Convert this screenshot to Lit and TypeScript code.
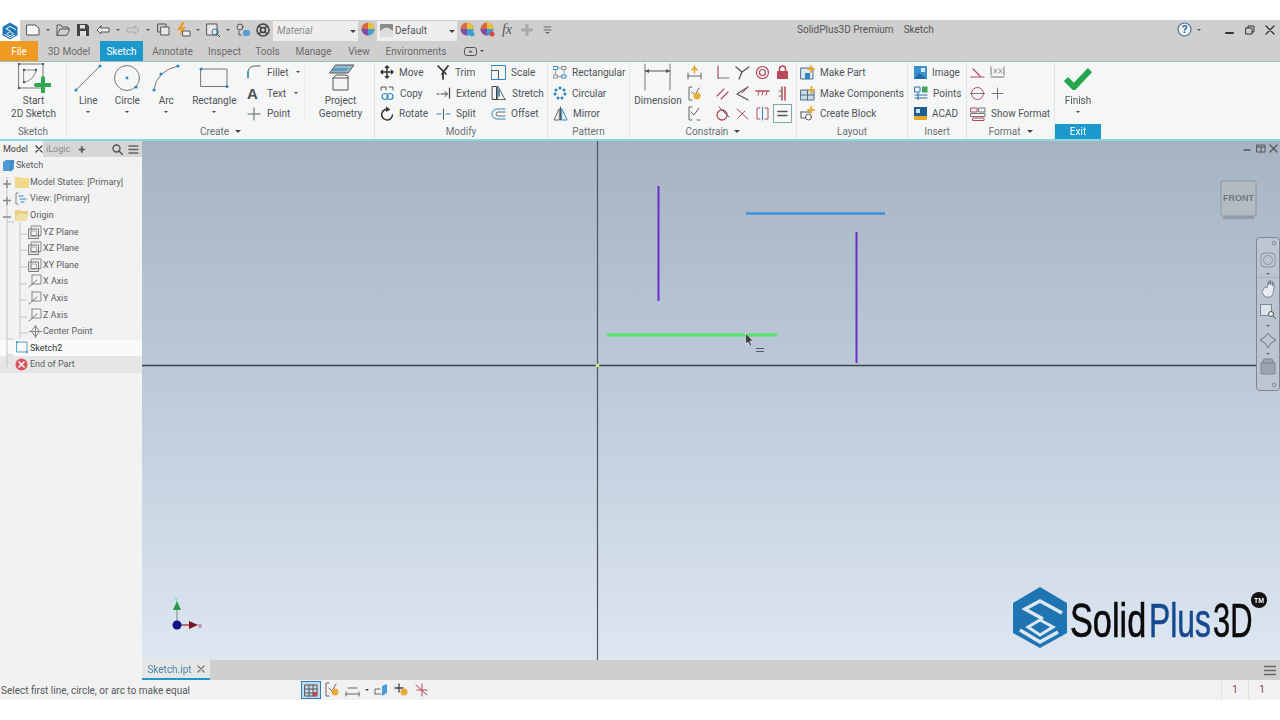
import { LitElement, html, css, svg, nothing } from 'lit';
import { customElement } from 'lit/decorators.js';

// small helper: every ribbon icon is an inline svg drawn on a w x h box
const ic = (w: number, h: number, body: unknown) =>
  html`<svg class="ic" width=${w} height=${h} viewBox="0 0 ${w} ${h}" fill="none" stroke-linecap="round" stroke-linejoin="round">${body}</svg>`;

const BLUE = '#2c86c4';
const GREY = '#5f6468';
const RED = '#b8485a';

const dot = (x: number, y: number, c = BLUE, r = 1.3) => svg`<circle cx=${x} cy=${y} r=${r} fill=${c}/>`;

const icons: Record<string, unknown> = {
  fillet: ic(16, 16, svg`<path d="M2 14V8q0-5 6-6h6" stroke=${GREY} stroke-width="1"/><path d="M2 13V8" stroke=${BLUE} stroke-width="1.4"/>`),
  text: ic(16, 16, svg`<text x="1" y="14" font-family="Liberation Sans" font-weight="700" font-size="15" fill="#4a4f53">A</text>`),
  point: ic(16, 16, svg`<path d="M8 2v12M2 8h12" stroke=${GREY}/>`),
  move: ic(14, 14, svg`<path d="M7 1v12M1 7h12M5.500 2.500 7 1l1.500 1.500M5.500 11.500 7 13l1.500-1.500M2.500 5.500 1 7l1.500 1.500M11.500 5.500 13 7l-1.500 1.500" stroke="#333" stroke-width="1.500"/>`),
  copy: ic(15, 15, svg`<path d="M1 4V1h5v3M9 1h4v3" stroke="#555"/><circle cx="5" cy="10.500" r="3" stroke=${BLUE} stroke-width="1.200"/><circle cx="10" cy="10.500" r="3" stroke=${BLUE} stroke-width="1.200"/>`),
  rotate: ic(14, 15, svg`<path d="M9 3.500A5.400 5.400 0 1 0 12.500 9" stroke="#333" stroke-width="1.500"/><path d="M6 .5 10 3.500 6 6Z" fill="#333"/>`),
  trim: ic(14, 15, svg`<path d="M2 1l8 8M12 1 6 9M7 6v8" stroke="#333" stroke-width="1.700"/>`),
  extend: ic(15, 12, svg`<path d="M1 7h2M5 7h6M9 4.500 11.500 7 9 9.500" stroke="#444"/><path d="M13.500 1v10" stroke="#444" stroke-width="1.200"/>`),
  split: ic(15, 12, svg`<path d="M1 6h4M10 6h4" stroke=${BLUE}/><path d="M7.500 1v10" stroke="#555"/>`),
  scale: ic(15, 15, svg`<rect x=".5" y="5.500" width="7" height="9" stroke="#555"/><rect x=".5" y=".5" width="14" height="14" stroke=${BLUE} fill="none"/>`),
  stretch: ic(16, 16, svg`<path d="M1.500 1.500h4v13h-4zM1.500 14.500h13" stroke="#444"/><path d="M7 1.500 14 14.500H7z" stroke=${GREY}/><path d="M8 5v6" stroke=${BLUE} stroke-width="1.600"/>`),
  offset: ic(15, 12, svg`<path d="M14 1H6a5 5 0 0 0 0 10h8" stroke=${BLUE}/><path d="M14 4H7a2 2 0 0 0 0 4h7" stroke="#666"/>`),
  rect: ic(14, 13, svg`<rect x=".5" y=".5" width="4" height="3" stroke=${BLUE}/><rect x="9" y=".5" width="4" height="3" stroke="#888"/><rect x=".5" y="9" width="4" height="3" stroke="#888"/><rect x="9" y="9" width="4" height="3" stroke=${BLUE}/><path d="M5 2h3M2.500 4v4M11 4v4M5 10.500h3" stroke="#999"/>`),
  circ: ic(14, 14, svg`${[[7, 2], [11, 4], [12, 8], [9, 12], [5, 12], [2, 8], [3, 4]].map(([x, y]) => dot(x, y, '#2c7fc0', 1.5))}`),
  mirror: ic(15, 15, svg`<path d="M7.500 1v13" stroke="#555"/><path d="M6 3 1 14h5z" stroke="#666"/><path d="M9 3l5 11H9z" stroke=${BLUE}/>`),
  part: ic(15, 15, svg`<rect x="1" y="3" width="12" height="11" fill="#dfe8ef" stroke="#4a6d8c"/><rect x="5" y="8" width="5" height="6" fill=${BLUE}/><path d="M11 1v6M8 4h6" stroke="#e9a92c" stroke-width="1.800"/>`),
  comps: ic(15, 15, svg`<rect x="1" y="4" width="13" height="10" fill="#cfdce6" stroke="#4a6d8c"/><path d="M7.500 4v10M1 9h13" stroke="#4a6d8c"/><path d="M11.500 1v6M8.500 4h6" stroke="#e9a92c" stroke-width="1.800"/>`),
  block: ic(15, 15, svg`<path d="M1 6h9M1 6v6h4" stroke="#555"/><circle cx="8.500" cy="11" r="3" stroke="#555"/><path d="M11 1v6M8 4h6" stroke="#e9a92c" stroke-width="1.800"/>`),
  image: ic(13, 13, svg`<rect width="13" height="13" fill="#3d8fd0"/><rect x="7" y="2" width="4" height="4" fill="#d5ecfa"/><path d="M0 13 5 7l8 6Z" fill="#1f6aa8"/>`),
  points: ic(14, 14, svg`<rect x="1" y="1" width="5" height="5" stroke="#2c6ea8"/><rect x="8" y=".5" width="5.500" height="6" fill="#3da35d"/><path d="M1 9h12M1 12h12M4 7v7" stroke="#2c6ea8"/>`),
  acad: ic(13, 13, svg`<rect width="13" height="13" fill="#1f5f8f"/><path d="M0 9h13v4H0z" fill="#e8a92a"/><rect x="2" y="2" width="4" height="4" fill="#cfe3f2"/>`),
  format: ic(16, 14, svg`<rect x="1" y="1" width="6" height="4" stroke=${RED}/><rect x="9" y="1" width="6" height="4" stroke="#777"/><rect x="1" y="6.500" width="14" height="3" stroke="#777"/><rect x="3" y="11" width="11" height="2.500" stroke=${RED}/>`),
};

type Item = { icon: string; label: string; caret?: boolean };

const col = (items: Item[], width: number) => html`<div class="stack" style="width:${width}px">
  ${items.map(i => html`<div class="row">${icons[i.icon]}<span>${i.label}</span>${i.caret ? html`<i class="caret"></i>` : nothing}</div>`)}
</div>`;

const big = (icon: unknown, label: string, width: number, caret = true) => html`<div class="big" style="width:${width}px">
  <div class="big-ic">${icon}</div>
  <span>${label}</span>
  ${caret ? html`<i class="caret"></i>` : nothing}
</div>`;

const line = ic(30, 30, svg`<path d="M3 27 27 3" stroke="#777" stroke-width="1"/>${dot(3, 27, BLUE, 1.6)}${dot(27, 3, BLUE, 1.6)}`);
const circle = ic(30, 30, svg`<circle cx="15" cy="15" r="12.500" stroke="#777"/>${dot(15, 15, BLUE, 1.4)}${dot(24, 24, BLUE, 1.6)}`);
const arc = ic(30, 30, svg`<path d="M3 27Q5 8 27 3" stroke="#777"/>${dot(3, 27, BLUE, 1.6)}${dot(27, 3, BLUE, 1.6)}${dot(10, 11, BLUE, 1.5)}`);
const rectangle = ic(30, 24, svg`<rect x="2" y="3" width="26" height="17.500" stroke="#777"/>${dot(2, 3, BLUE, 1.5)}${dot(28, 20.5, BLUE, 1.5)}`);
const project = ic(28, 28, svg`<path d="M9 1h18l-6 8H3z" fill="#9bb9cc" stroke="#555"/><path d="M7 4h15l-3 3H5z" fill="#5f9bc4"/><path d="M6 14h15v-2l-3-1H9l-3 3v12h15V14" stroke="#555" fill="#f4f4f4"/>`);
const start = ic(34, 30, svg`<rect x="2" y="1" width="24" height="24" stroke="#777"/><path d="M7 7h12q-1 8-10 12H7z" stroke="#888"/>${[[2, 1], [26, 1], [2, 25], [7, 7], [19, 7], [7, 19]].map(([x, y]) => dot(x, y, '#555', 1.2))}<path d="M26 15v14M19 22h14" stroke="#2fa84f" stroke-width="4"/>`);
const dim = ic(30, 30, svg`<path d="M2 1v26M27 1v26" stroke="#777"/><path d="M2 8h25" stroke="#555"/><path d="M2 8l4-2v4zM27 8l-4-2v4z" fill="#555"/>`);
const check = ic(28, 24, svg`<path d="M2 13 10 21 26 4" stroke="#24a64a" stroke-width="6" stroke-linejoin="miter" stroke-linecap="butt"/>`);

// constrain grid, laid out on 3 rows of 20px columns
const c = (body: unknown) => ic(15, 15, body);
const constrainRows = [
  [c(svg`<path d="M1 11h13M1 8v6M14 8v6" stroke="#666"/><path d="M7.500 1v7M5 5l2.500-3L10 5" stroke="#e2a62b" stroke-width="1.500"/>`),
    c(svg`<path d="M3 1v12" stroke=${RED} stroke-width="1.200"/><path d="M3 13h11" stroke="#777"/>`),
    c(svg`<path d="M1 2l6 5 7-5M7 7l-3 7" stroke="#555" stroke-width="1.300"/>`),
    c(svg`<circle cx="7.500" cy="7.500" r="6" stroke=${RED} stroke-width="1.200"/><circle cx="7.500" cy="7.500" r="3" stroke=${RED} stroke-width="1.200"/>`),
    c(svg`<rect x="2" y="6" width="11" height="8" rx="1" fill=${RED}/><path d="M4.500 6V4a3 3 0 0 1 6 0v2" stroke=${RED} stroke-width="1.500"/>`)],
  [c(svg`<path d="M5 1H2v13h3" stroke="#666"/><path d="M5 6l3 3 4-7" stroke="#666"/><circle cx="10" cy="10" r="3.500" fill="#e8ac3a"/>`),
    c(svg`<path d="M2 10 9 3M6 13 13 6" stroke=${RED} stroke-width="1.100"/>`),
    c(svg`<path d="M13 1 2 8l11 6" stroke="#555" stroke-width="1.200"/><path d="M7 7 13 1" stroke=${RED}/>`),
    c(svg`<path d="M1 5h13" stroke=${RED} stroke-width="1.500"/><path d="M3 9l1-3M7 9l1-3M11 9l1-3" stroke=${RED}/>`),
    c(svg`<path d="M7 1v13M10 1v13" stroke=${RED} stroke-width="1.500"/><path d="M4 5h3M4 10h3" stroke="#777"/>`)],
  [c(svg`<path d="M5 1H2v13h3" stroke="#666"/><path d="M4 6l3 3 5-7" stroke="#666"/><path d="M10 14h3" stroke="#666"/>`),
    c(svg`<circle cx="7" cy="9" r="5" stroke=${RED} stroke-width="1.300"/><path d="M4 1l10 10" stroke="#555"/>`),
    c(svg`<path d="M2 3l11 10M3 12l7-7" stroke=${RED}/>`),
    c(svg`<path d="M5 2H2v11h3M10 2h3v11h-3" stroke=${RED}/><path d="M7.500 1v13" stroke=${BLUE}/>`),
    c(svg`<path d="M3 5.500h9M3 9.500h9" stroke="#555" stroke-width="1.600"/>`)],
];

const formatIcons = [
  [ic(15, 13, svg`<path d="M1 11h13M3 3l7 7" stroke=${RED} stroke-width="1.200"/>`),
    ic(15, 13, svg`<path d="M1 9V1M14 9V1M1 11h13" stroke="#777"/><path d="M4 3l3 4M7 3 4 7M9 3l3 4M12 3 9 7" stroke="#777" stroke-width=".8"/>`)],
  [ic(15, 15, svg`<circle cx="7.500" cy="7.500" r="6" stroke=${RED}/><path d="M0 7.500h15" stroke="#777"/>`),
    ic(15, 15, svg`<path d="M7.500 2v11M2 7.500h11" stroke="#777"/>`)],
];

// tree rows of the browser, indent is the text column's icon start
const tree = (indent: number, icon: unknown, label: string, cls = '') => html`<div class="node ${cls}" style="padding-left:${indent}px">${icon}<span>${label}</span></div>`;
const planeIc = ic(14, 14, svg`<rect x="3.500" y="1" width="9.500" height="9.500" stroke="#888"/><rect x="1" y="4" width="9.500" height="9.500" stroke="#777"/><rect x="3" y="6" width="5.500" height="5.500" stroke="#aaa"/>`);
const axisIc = ic(14, 14, svg`<path d="M4 1h9v9H4M4 1v9" stroke="#888"/><path d="M1 13 9 6" stroke="#777"/>`);

const nav = (body: unknown) => html`<span class="qat">${body}</span>`;
const miniCaret = html`<i class="mini"></i>`;

@customElement('app-root')
export class AppRoot extends LitElement {
  static styles = css`
    :host {
      display: block;
      width: 1280px;
      height: 720px;
      overflow: hidden;
      background: #fff;
      font-family: Roboto, 'Noto Sans', sans-serif;
      font-size: 10px;
      color: #55595c;
    }
    .ic { display: block; flex: none; }
    .app { display: flex; flex-direction: column; height: 680px; margin-top: 20px; filter: blur(0.35px); position: relative; }

    .title { height: 21px; background: #cfcfcf; display: flex; align-items: center; flex: none; box-sizing: border-box; padding-bottom: 2px; }
    .logo { width: 20px; height: 21px; margin-bottom: -2px; background: #fff; display: flex; align-items: center; justify-content: center; margin-right: 3px; }
    .qat { display: flex; align-items: center; justify-content: center; flex: none; width: 20px; }
    .mini { display: block; flex: none; width: 0; height: 0; border: 2px solid transparent; border-top: 2.500px solid #555; border-bottom: 0; margin: 0 3px; }
    .combo { height: 20px; background: #eeeeee; display: flex; align-items: center; gap: 2px; padding: 0 3px; flex: none; position: relative; margin-bottom: -2px; }
    .combo i { position: absolute; right: 2px; top: 9px; width: 0; height: 0; border: 3px solid transparent; border-top: 3.500px solid #444; border-bottom: 0; }
    .material { width: 85px; font-style: italic; color: #8a8a8a; box-sizing: border-box; padding-left: 4px; }
    .default { width: 80px; margin-left: -1px; box-sizing: border-box; color: #555; }
    .caption { position: absolute; left: 797px; top: 4px; color: #555; display: flex; gap: 10px; }
    .win { margin-left: auto; display: flex; align-items: center; }
    .win .mini { margin-right: 19px; }

    .tabs { height: 20px; background: #cfcfcf; display: flex; flex: none; align-items: stretch; color: #6a6a6a; }
    .tab { display: flex; align-items: center; justify-content: center; }
    .tab.file { width: 38px; background: #ef9a22; color: #fff; }
    .tab.on { background: #1b99cc; color: #fff; width: 43px; }

    .ribbon { height: 80px; background: #f5f6f6; border-top: 1px solid #9fbcbc; border-bottom: 2px solid #8fd6dc; display: flex; flex: none; box-sizing: border-box; }
    .panel { display: flex; flex-direction: column; flex: none; border-right: 1px solid #e3e4e4; box-sizing: border-box; }
    .body { flex: 1; display: flex; min-height: 0; }
    .label { height: 15px; text-align: center; color: #6c7073; line-height: 14px; display: flex; justify-content: center; align-items: center; gap: 6px; }
    .label.exit { background: #1b99cc; color: #fff; }
    .label i { width: 0; height: 0; border: 3px solid transparent; border-top: 3.500px solid #444; border-bottom: 0; }

    .stack { display: flex; flex-direction: column; flex: none; }
    .row { height: 21px; display: flex; align-items: center; gap: 5px; white-space: nowrap; color: #505458; }
    .row .caret { margin-left: 3px; }
    .caret { display: block; width: 0; height: 0; border: 2px solid transparent; border-top: 2.500px solid #444; border-bottom: 0; }
    .big { display: flex; flex-direction: column; align-items: center; flex: none; text-align: center; line-height: 13px; color: #505458; white-space: pre-line; }
    .big-ic { height: 32px; display: flex; align-items: center; justify-content: center; }
    .big .caret { margin-top: 4px; }
    .vsep { width: 1px; background: #e8e9e9; margin: 4px 2px 4px 0; flex: none; }
    .cgrid { display: flex; flex-direction: column; flex: none; }
    .crow { height: 21px; display: flex; align-items: center; gap: 5px; }
    .crow span:first-child { margin-right: 8px; }
    .cell-on { outline: 1px solid #7fa9a9; outline-offset: 1px; background: #f8f8f8; }

    .main { flex: 1; display: flex; min-height: 0; }
    .browser { width: 142px; flex: none; background: #f2f2f2; display: flex; flex-direction: column; position: relative; }
    .bhead { height: 16px; background: #d6d6d6; display: flex; align-items: center; font-size: 9px; flex: none; }
    .bhead .model { background: #f2f2f2; height: 100%; display: flex; align-items: center; gap: 7px; padding: 0 3px; width: 37px; color: #444; }
    .bhead .logic { margin-left: 3px; color: #8a8a8a; }
    .bhead .plus { margin-left: 8px; color: #555; font-size: 13px; line-height: 1; font-weight: 600; }
    .bhead .tools { margin-left: auto; display: flex; gap: 5px; padding-right: 3px; }
    .node { height: 16.600px; display: flex; align-items: center; gap: 1px; font-size: 9px; color: #5a5e61; box-sizing: border-box; white-space: nowrap; position: relative; }
    .node.cur { background: #fafafa; color: #333; }
    .node.end { background: #e6e6e6; }
    .lines { position: absolute; left: 0; top: 16px; pointer-events: none; }

    .right { flex: 1; display: flex; flex-direction: column; min-width: 0; }
    .view { flex: 1; min-height: 0; background: linear-gradient(180deg, #a6b3c2 0%, #b9c6d5 40%, #dde7f2 100%); position: relative; }
    .view svg { display: block; }
    .vbtns { position: absolute; right: 2px; top: 3px; display: flex; gap: 3px; }
    .doc { height: 20px; background: #cfcfcf; flex: none; display: flex; align-items: stretch; }
    .doc .t { width: 68px; box-sizing: border-box; background: #e6e6e6; border-bottom: 2px solid #1b99cc; display: flex; align-items: center; justify-content: center; gap: 5px; color: #4b88a8; }
    .doc .m { margin-left: auto; padding-right: 4px; display: flex; align-items: center; }
    .status { height: 20px; background: #f1f1f1; flex: none; margin-left: -142px; position: relative; display: flex; align-items: center; padding: 1px 0 0 1px; box-sizing: border-box; color: #55595c; }
    .sico { position: absolute; left: 302px; top: 0; height: 19px; display: flex; align-items: center; gap: 5px; }
    .cnt { position: absolute; right: 5px; top: 0; height: 20px; display: flex; color: #7a4a50; }
    .cnt span { width: 26px; border-left: 1px solid #e2e2e2; text-align: center; line-height: 20px; }
  `;

  private logoMark(size: number) {
    return html`<svg width=${size} height=${size} viewBox="1010 585 60 65">
      <path d="M1040 587 1067 603V633L1040 648 1013 633V603Z" fill="#1f74b2"/>
      <path d="M1062 613 1040 601 1025 609 1043 619M1020 630 1040 642 1058 632" fill="none" stroke="#fff" stroke-width="3.500"/>
      <path d="M1028 627 1040 620 1053 627 1040 635Z" fill="none" stroke="#fff" stroke-width="3"/>
    </svg>`;
  }

  render() {
    const q = nav;
    const ball = (x = '') => ic(15, 15, svg`<circle cx="7" cy="7" r="6.500" fill="#d9693c"/><path d="M7 7V.5a6.500 6.500 0 0 1 6.500 6.500z" fill="#e7c33d"/><path d="M7 7h6.500A6.500 6.500 0 0 1 7 13.500z" fill="#3f9fd1"/><path d="M7 7v6.500A6.500 6.500 0 0 1 .5 7z" fill="#7b4fae"/>${x ? svg`<circle cx="12" cy="12" r="2.500" fill=${x}/>` : nothing}`);
    return html`
      <div class="app">
        <div class="title">
          <div class="logo">${this.logoMark(18)}</div>
          ${q(ic(14, 12, svg`<path d="M1 1h8l4 3v7H1z" fill="#f7f7f7" stroke="#555"/>`))}${miniCaret}
          ${q(ic(14, 12, svg`<path d="M1 11V1h4l1 2h6v2M1 11l3-6h10l-3 6z" stroke="#555"/>`))}
          ${q(ic(12, 12, svg`<path d="M0 0h10l2 2v10H0z" fill="#444"/><rect x="3" y="1" width="5" height="3.500" fill="#ddd"/><rect x="3" y="7" width="6" height="5" fill="#ddd"/>`))}
          ${q(ic(14, 10, svg`<path d="M5 1 1 5l4 4V7h8V3H5z" stroke="#555" fill="#eee"/>`))}${miniCaret}
          ${q(ic(14, 10, svg`<path d="M9 1l4 4-4 4V7H1V3h8z" stroke="#aaa"/>`))}${miniCaret}
          ${q(ic(13, 13, svg`<rect x="1" y="1" width="8" height="8" stroke="#555"/><rect x="4" y="4" width="8" height="8" fill="#e8e8e8" stroke="#555"/>`))}
          ${q(ic(15, 15, svg`<path d="M6 0 1 8h4l-2 6 7-9H6l3-5z" fill="#e8a02c"/><rect x="7" y="9" width="7" height="5" fill="#eee" stroke="#555"/>`))}${miniCaret}
          ${q(ic(14, 14, svg`<rect x="1" y="1" width="10" height="11" fill="#e8e8e8" stroke="#555"/><circle cx="9" cy="9" r="3" stroke="#2c7a8c"/><path d="M11 11l3 3" stroke="#333"/>`))}${miniCaret}
          ${q(ic(14, 14, svg`<circle cx="4" cy="4" r="3" stroke="#555"/><path d="M3 8v4h2" stroke="#555"/><rect x="7" y="7" width="7" height="6" rx="2" fill="#5b9fd4"/>`))}
          ${q(ic(14, 14, svg`<circle cx="7" cy="7" r="6" stroke="#444" stroke-width="1.500"/><circle cx="7" cy="7" r="2.500" stroke="#444" stroke-width="1.500"/><path d="M3 3l2 2M11 3 9 5M3 11l2-2M11 11 9 9" stroke="#444" stroke-width="1.500"/>`))}
          <div class="combo material">Material<i></i></div>
          ${q(ball())}
          <div class="combo default">${ic(13, 13, svg`<rect width="13" height="13" rx="1" fill="#8a8a8a"/><path d="M0 7q6.500-7 13 0v6H0z" fill="#ddd"/>`)}Default<i></i></div>
          ${q(ball('#3f9fd1'))}${q(ball('#d44'))}
          ${q(html`<span style="font-family:'Liberation Serif',serif;font-style:italic;font-size:14px;color:#555">fx</span>`)}
          ${q(ic(12, 12, svg`<path d="M6 1v10M1 6h10" stroke="#aaa" stroke-width="3"/>`))}
          ${q(ic(9, 8, svg`<path d="M1 1h7M1 4h7" stroke="#666"/><path d="M2 6h5L4.500 8z" fill="#666"/>`))}
          <div class="win">
            ${q(ic(15, 15, svg`<circle cx="7.500" cy="7.500" r="6.500" stroke="#4a6f9c" stroke-width="1.200" fill="#f2f2f2"/><text x="4.500" y="11" font-size="10" font-weight="700" fill="#2a5c9c" font-family="Liberation Sans">?</text>`))}${miniCaret}
            ${q(ic(10, 10, svg`<path d="M1 8h7" stroke="#333" stroke-width="2"/>`))}
            ${q(ic(10, 10, svg`<rect x="1" y="3" width="6" height="6" stroke="#333"/><path d="M3 3V1h6v6H7" stroke="#333"/>`))}
            ${q(ic(10, 10, svg`<path d="M1 1l8 8M9 1 1 9" stroke="#333" stroke-width="1.300"/>`))}
          </div>
        </div>
        <div class="caption"><span>SolidPlus3D Premium</span><span>Sketch</span></div>
        <div class="tabs">
          <div class="tab file">File</div>
          <div class="tab" style="width:62px">3D Model</div>
          <div class="tab on">Sketch</div>
          <div class="tab" style="width:59px">Annotate</div>
          <div class="tab" style="width:45px">Inspect</div>
          <div class="tab" style="width:41px">Tools</div>
          <div class="tab" style="width:51px">Manage</div>
          <div class="tab" style="width:40px">View</div>
          <div class="tab" style="width:74px">Environments</div>
          <span class="tab" style="width:30px;margin-left:6px;gap:3px">${ic(13, 9, svg`<rect x=".5" y=".5" width="12" height="8" rx="2" stroke="#555"/><path d="M4.500 5.500h4L6.500 3z" fill="#555"/>`)}<i class="caret"></i></span>
        </div>

        <div class="ribbon">
          <div class="panel" style="width:67px">
            <div class="body">${big(start, 'Start\n2D Sketch', 67, false)}</div>
            <div class="label">Sketch</div>
          </div>
          <div class="panel" style="width:308px">
            <div class="body">
              <div style="width:4px"></div>
              ${big(line, 'Line', 39)}${big(circle, 'Circle', 39)}${big(arc, 'Arc', 39)}${big(rectangle, 'Rectangle', 57)}
              <div style="width:7px"></div>
              ${col([{ icon: 'fillet', label: 'Fillet', caret: true }, { icon: 'text', label: 'Text', caret: true }, { icon: 'point', label: 'Point' }], 58)}
              <div class="vsep"></div>
              ${big(project, 'Project\nGeometry', 67, false)}
            </div>
            <div class="label">Create <i></i></div>
          </div>
          <div class="panel" style="width:173px">
            <div class="body">
              <div style="width:5px"></div>
              ${col([{ icon: 'move', label: 'Move' }, { icon: 'copy', label: 'Copy' }, { icon: 'rotate', label: 'Rotate' }], 56)}
              ${col([{ icon: 'trim', label: 'Trim' }, { icon: 'extend', label: 'Extend' }, { icon: 'split', label: 'Split' }], 55)}
              ${col([{ icon: 'scale', label: 'Scale' }, { icon: 'stretch', label: 'Stretch' }, { icon: 'offset', label: 'Offset' }], 56)}
            </div>
            <div class="label">Modify</div>
          </div>
          <div class="panel" style="width:82px">
            <div class="body">
              <div style="width:5px"></div>
              ${col([{ icon: 'rect', label: 'Rectangular' }, { icon: 'circ', label: 'Circular' }, { icon: 'mirror', label: 'Mirror' }], 75)}
            </div>
            <div class="label">Pattern</div>
          </div>
          <div class="panel" style="width:167px">
            <div class="body">
              ${big(dim, 'Dimension', 56, false)}
              <div style="width:1px"></div>
              <div class="cgrid">
                ${constrainRows.map(r => html`<div class="crow">${r.map((i, n) => html`<span class=${r === constrainRows[2] && n === 4 ? 'cell-on' : ''}>${i}</span>`)}</div>`)}
              </div>
            </div>
            <div class="label">Constrain <i></i></div>
          </div>
          <div class="panel" style="width:111px">
            <div class="body">
              <div style="width:3px"></div>
              ${col([{ icon: 'part', label: 'Make Part' }, { icon: 'comps', label: 'Make Components' }, { icon: 'block', label: 'Create Block' }], 105)}
            </div>
            <div class="label">Layout</div>
          </div>
          <div class="panel" style="width:59px">
            <div class="body">
              <div style="width:6px"></div>
              ${col([{ icon: 'image', label: 'Image' }, { icon: 'points', label: 'Points' }, { icon: 'acad', label: 'ACAD' }], 52)}
            </div>
            <div class="label">Insert</div>
          </div>
          <div class="panel" style="width:88px">
            <div class="body">
              <div style="width:3px"></div>
              <div class="stack">
                ${formatIcons.map(r => html`<div class="row">${r}</div>`)}
                <div class="row">${icons.format}<span>Show Format</span></div>
              </div>
            </div>
            <div class="label">Format <i></i></div>
          </div>
          <div class="panel" style="width:46px;border-right:0">
            <div class="body">${big(check, 'Finish', 46)}</div>
            <div class="label exit">Exit</div>
          </div>
        </div>

        <div class="main">
          <div class="browser">
            <div class="bhead">
              <div class="model">Model ${ic(8, 8, svg`<path d="M1 1l6 6M7 1 1 7" stroke="#444" stroke-width="1.200"/>`)}</div>
              <span class="logic">iLogic</span>
              <span class="plus">+</span>
              <span class="tools">
                ${ic(11, 11, svg`<circle cx="4.500" cy="4.500" r="3.500" stroke="#555" stroke-width="1.400"/><path d="M7 7l3.500 3.500" stroke="#555" stroke-width="1.500"/>`)}
                ${ic(11, 11, svg`<path d="M1 2h9M1 5.500h9M1 9h9" stroke="#666" stroke-width="1.400"/>`)}
              </span>
            </div>
            ${tree(2, ic(13, 13, svg`<path d="M1 3l3-2h8v9l-3 2H1z" fill="#4d9bd6"/><path d="M9 3h3M9 3v9" stroke="#2f77ad"/>`), 'Sketch')}
            ${tree(15, ic(14, 12, svg`<path d="M0 1h5l1 1h8v10H0z" fill="#efd98a"/>`), 'Model States: [Primary]')}
            ${tree(15, ic(14, 13, svg`<path d="M3 1H1v11h2" stroke="#888"/><path d="M4 4h4M5 7h6M6 10h3" stroke=${BLUE}/>`), 'View: [Primary]')}
            ${tree(15, ic(14, 12, svg`<path d="M0 1h5l1 1h7v3H3L0 12z" fill="#e7cf7f"/><path d="M3 5h11l-3 7H0z" fill="#f0e0a4"/>`), 'Origin')}
            ${tree(28, planeIc, 'YZ Plane')}${tree(28, planeIc, 'XZ Plane')}${tree(28, planeIc, 'XY Plane')}
            ${tree(28, axisIc, 'X Axis')}${tree(28, axisIc, 'Y Axis')}${tree(28, axisIc, 'Z Axis')}
            ${tree(29, ic(13, 13, svg`<path d="M6.500 1l4 5.500-4 5.500-4-5.500zM6.500 0v13M0 6.500h13" stroke="#888"/>`), 'Center Point')}
            ${tree(15, ic(14, 13, svg`<rect x="2" y="1" width="10" height="10" stroke="#4aa6c8"/>${dot(2, 1, '#3b8cb8', 1)}${dot(12, 11, '#3b8cb8', 1)}`), 'Sketch2', 'cur')}
            ${tree(15, ic(14, 13, svg`<circle cx="6.500" cy="6.500" r="6" fill="#d9535f"/><path d="M4 4l5 5M9 4 4 9" stroke="#fff" stroke-width="1.500"/>`), 'End of Part', 'end')}
            <svg class="lines" width="32" height="215" fill="none" stroke="#c4c4c4">
              <path d="M7 20v190M7 65h7M7 182h6M7 198h6M20 65v117"/>
              <path d="M3 27h8M7 23v8M3 43.500h8M7 40v8M3 60h8" stroke="#888" stroke-width="1.300"/>
              <path d="M20 77h7M20 93h7M20 110h7M20 127h7M20 143h7M20 160h7M20 176h8"/>
            </svg>
          </div>
          <div class="right">
            <div class="view">
              <svg width="1138" height="519" viewBox="142 141 1138 519">
                <path d="M597.500 140v520" stroke="#4d5661" stroke-width="1.200"/>
                <path d="M142 365.500h1138" stroke="#39424a" stroke-width="1.600"/>
                <circle cx="597.500" cy="365.500" r="1.800" fill="#d7f06a"/>
                <path d="M658.500 186v115M856.500 232v131" stroke="#6a2fc8" stroke-width="2"/>
                <path d="M746 213.500h139" stroke="#3a92d8" stroke-width="2.400"/>
                <path d="M607 335h170" stroke="#52e56b" stroke-width="3"/>
                <path d="M745.500 333v11l2.500-2 2 4 1.800-.8-1.900-4h3.500z" fill="#3b3f44" stroke="#fff" stroke-width=".6"/>
                <path d="M756 348.500h8M756 351.500h8" stroke="#555b63"/>
                <path d="M177 625v-20" stroke="#9aa4a8" stroke-width="1.500"/>
                <path d="M177 601l-4 9h8z" fill="#2a9a4a"/>
                <text x="174" y="602" font-size="7" fill="#66d68a" font-family="Liberation Sans">Y</text>
                <path d="M177 625h14" stroke="#a0484c" stroke-width="1.500"/>
                <path d="M198 625l-9-4v8z" fill="#7a1220"/>
                <circle cx="177" cy="625" r="4.500" fill="#10108a"/>
                <text x="198" y="628" font-size="8" fill="#b03a44" font-family="Liberation Sans">x</text>

                <path d="M1224 216q15-3 30 0v3h-32z" fill="#7a8694" opacity=".55"/>
                <rect x="1221" y="181" width="35" height="35" rx="1.500" fill="#b4bac2" stroke="#8e97a2"/>
                <text x="1238.500" y="201" text-anchor="middle" font-size="9" font-weight="700" fill="#6f7782" font-family="Liberation Sans">FRONT</text>

                <rect x="1256.500" y="237.500" width="23" height="153" rx="3" fill="#bcc6d2" stroke="#7f8892"/>
                <circle cx="1274" cy="243" r="1.800" fill="none" stroke="#7f8892"/><circle cx="1274" cy="385" r="1.800" fill="none" stroke="#7f8892"/>
                <rect x="1261" y="253" width="14" height="14" rx="4" fill="none" stroke="#8e97a2"/><circle cx="1268" cy="260" r="4.500" fill="none" stroke="#8e97a2"/>
                <path d="M1257 277.500h22" stroke="#a9b2bc"/><path d="M1266 273h4l-2 2z" fill="#666"/>
                <path d="M1262 292l3 5h6q3-3 3-10v-4l-1.500 3v-5l-2 4v-5l-2 5v-4l-1.500 7-2-1.500z" fill="#e9edf2" stroke="#6f7782" stroke-width=".8"/>
                <rect x="1260.500" y="304.500" width="11" height="11" fill="#dde3ea" stroke="#7f8892"/><circle cx="1271" cy="314" r="2.500" fill="#eee" stroke="#555"/><path d="M1273 316l3 3" stroke="#555"/>
                <path d="M1266 325h4l-2 2zM1266 353h4l-2 2z" fill="#666"/>
                <path d="M1268 333l3 4 5 3-5 3-3 5-3-5-5-3 5-3z" fill="none" stroke="#6f7782"/>
                <path d="M1261 363h14v11h-14zM1262 363l2-4h8l2 4" fill="#9aa3ae" stroke="#7f8892"/>

                <path d="M1040 587 1067 603V633L1040 648 1013 633V603Z" fill="#1f74b2"/>
                <path d="M1062 613 1040 601 1025 609 1043 619M1020 630 1040 642 1058 632" fill="none" stroke="#dfe8f1" stroke-width="3.500"/>
                <path d="M1028 627 1040 620 1053 627 1040 635Z" fill="none" stroke="#dfe8f1" stroke-width="3"/>
                <g font-size="49" font-family="Liberation Sans" stroke-width=".6">
                  <text transform="translate(1070 637) scale(.7 1)" fill="#0a0a0a" stroke="#0a0a0a">Solid</text>
                  <text transform="translate(1149 637) scale(.65 1)" fill="#15498f" stroke="#15498f">Plus</text>
                  <text transform="translate(1213 637) scale(.63 1)" fill="#0a0a0a" stroke="#0a0a0a">3D</text>
                </g>
                <circle cx="1259" cy="600" r="8" fill="#111"/>
                <text x="1259" y="602.500" text-anchor="middle" font-size="7" font-weight="700" fill="#fff" font-family="Liberation Sans">TM</text>
              </svg>
              <div class="vbtns">
                ${ic(10, 8, svg`<path d="M1 6h6" stroke="#555" stroke-width="1.500"/>`)}
                ${ic(10, 9, svg`<rect x="1" y="1" width="8" height="7" stroke="#555"/><path d="M1 3h8M5 3v5" stroke="#555"/>`)}
                ${ic(9, 9, svg`<path d="M1 1l7 7M8 1 1 8" stroke="#555" stroke-width="1.300"/>`)}
              </div>
            </div>
            <div class="doc">
              <div class="t">Sketch.ipt ${ic(8, 8, svg`<path d="M1 1l6 6M7 1 1 7" stroke="#777" stroke-width="1.300"/>`)}</div>
              <div class="m">${ic(12, 11, svg`<path d="M0 1.500h12M0 5.500h12M0 9.500h12" stroke="#666" stroke-width="1.500"/>`)}</div>
            </div>
            <div class="status">
              <span>Select first line, circle, or arc to make equal</span>
              <div class="sico">
                <span style="background:#c3d9ec;outline:1px solid #2c7fc0;padding:1px 2px;display:block">${ic(14, 14, svg`<path d="M1 2h12v11H1zM1 6h12M1 10h12M5 2v11M9 2v11" stroke="#555"/><rect x="9" y="9" width="4" height="4" fill="#c6445a"/>`)}</span>
                ${ic(15, 15, svg`<path d="M4 1H1v13h3" stroke="#666"/><path d="M4 6l3 3 4-7" stroke="#666"/><circle cx="10" cy="10" r="3.500" fill="#e8ac3a"/>`)}
                ${ic(15, 14, svg`<path d="M1 9v4M14 9v4M1 11h13M3 5h9" stroke="#666"/>`)}<i class="caret"></i>
                ${ic(15, 14, svg`<path d="M1 11h6M1 11V6h5" stroke="#666"/><path d="M8 3l5-2v9l-5 3z" fill="#4d9bd6"/>`)}
                ${ic(15, 14, svg`<path d="M1 5h8M5 1v8" stroke="#444" stroke-width="1.300"/><circle cx="10" cy="9" r="3.500" fill="#e8ac3a"/>`)}
                ${ic(15, 14, svg`<path d="M2 2l11 10M8 1v12M3 7h10" stroke=${RED}/>`)}
              </div>
              <div class="cnt"><span>1</span><span>1</span></div>
            </div>
          </div>
        </div>
      </div>
    `;
  }
}
